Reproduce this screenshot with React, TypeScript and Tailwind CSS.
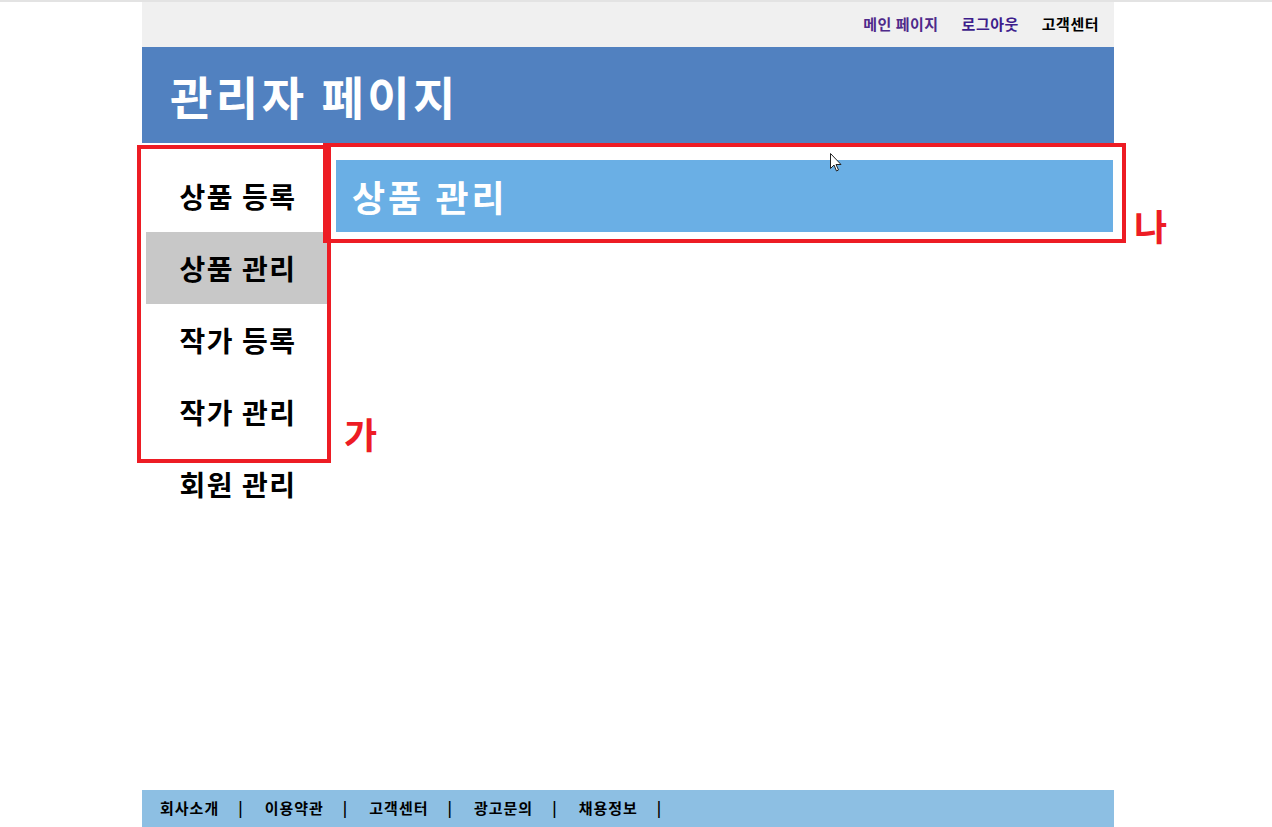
import React from 'react';

const font = { fontFamily: '"Noto Sans CJK KR", "Noto Sans", sans-serif' };

const menu = ['상품 등록', '상품 관리', '작가 등록', '작가 관리', '회원 관리'];
const footerLinks = ['회사소개', '이용약관', '고객센터', '광고문의', '채용정보'];

export default function App() {
  return (
    <div className="relative h-[827px] overflow-hidden bg-white border-t-2 border-[#e3e3e3]" style={font}>
      <div className="relative ml-[142px] flex h-[825px] w-[972px] flex-col">
        {/* top links */}
        <div className="flex h-[45px] items-center justify-end gap-[23px] bg-[#f0f0f0] pr-[15px] text-[15px] font-bold tracking-[0.5px]">
          <a className="text-[#4f2a8a]">메인 페이지</a>
          <a className="text-[#3d1d8c]">로그아웃</a>
          <a className="text-black">고객센터</a>
        </div>

        {/* title */}
        <div className="flex h-[96px] items-center bg-[#5181c0] pl-[28px]">
          <h1 className="text-[46px] font-bold leading-none tracking-[3.5px] text-white">관리자 페이지</h1>
        </div>

        {/* body */}
        <div className="flex flex-1">
          <ul className="w-[194px] pl-[4px] pr-[9px] pt-[17px]">
            {menu.map((m, i) => (
              <li
                key={m}
                className={
                  'flex h-[72px] items-center justify-center pl-[3px] text-[28px] font-bold tracking-[1.5px] text-black ' +
                  (i === 1 ? 'bg-[#c8c8c8]' : '')
                }
              >
                {m}
              </li>
            ))}
          </ul>
          <div className="flex-1 pr-[1px] pt-[17px]">
            <div className="flex h-[72px] items-center bg-[#6aafe5] pl-[16px]">
              <h2 className="text-[36px] font-bold leading-none tracking-[3px] text-white">상품 관리</h2>
            </div>
          </div>
        </div>

        {/* footer */}
        <div className="flex h-[37px] items-center bg-[#8dbfe3] pl-[18px] text-[15px] font-bold tracking-[1px] text-black">
          {footerLinks.map((f) => (
            <React.Fragment key={f}>
              <span>{f}</span>
              <span className="ml-[19px] mr-[21px]">|</span>
            </React.Fragment>
          ))}
        </div>

        {/* annotation overlays */}
        <div className="pointer-events-none absolute left-[-5px] top-[143px] h-[318px] w-[194px] border-[4px] border-[#ed1c24]" />
        <div className="pointer-events-none absolute left-[181px] top-[141px] h-[100px] w-[803px] border-[4px] border-[#ed1c24]" />
        <span className="absolute left-[202px] top-[413px] text-[36px] leading-none font-bold text-[#ed1c24]">가</span>
        <span className="absolute left-[992px] top-[205px] text-[36px] leading-none font-bold text-[#ed1c24]">나</span>

        {/* mouse cursor */}
        <svg className="absolute left-[688px] top-[151px]" width="12" height="20" viewBox="0 0 12 20">
          <path d="M0.5 0.5 L0.5 15.5 L4 12 L6.5 18 L8.5 17 L6 11.5 L11 11.5 Z" fill="white" stroke="#222" strokeWidth="1" />
        </svg>
      </div>
    </div>
  );
}
